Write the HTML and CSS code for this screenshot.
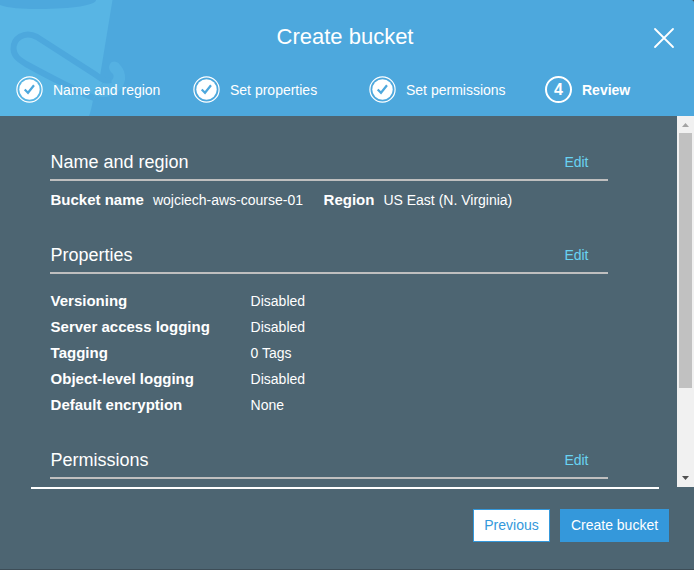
FILE: index.html
```html
<!DOCTYPE html>
<html lang="en">
<head>
<meta charset="utf-8">
<title>Create bucket</title>
<link rel="stylesheet" href="styles.css">
</head>
<body>
<div class="dialog">
  <header class="header">
    <svg class="bucket" width="130" height="116" viewBox="0 0 130 116" aria-hidden="true">
      <path d="M0 0H112.500L100 76L103 82L93 100Q91 111 89 116H0Z" fill="#58b5e4"/>
      <path d="M0 0H96C96 5 73 9 38 9C22 9 8 8 0 5Z" fill="#4da8dd"/>
      <path d="M90 93L103 83C112 83 115 78 113 74C109 71 108 67 110 64C112 60 118 61 120 65C124 69 125.500 74 125 80C123 91 113 97 103 97Q97 97 90 93Z" fill="#55b1e2"/>
      <path d="M111 80C105 82 100 78 96 75L37 37C24 30 13 39 13.500 49C14 57 20 60 26 64C48 76 70 88 94 98" fill="none" stroke="#4da8dd" stroke-width="6"/>
    </svg>
    <h1 class="title">Create bucket</h1>
    <svg class="close" width="22" height="22" viewBox="0 0 22 22" aria-label="Close"><path d="M2 2L20 20M20 2L2 20" stroke="#fff" stroke-width="1.800" stroke-linecap="round"/></svg>
    <ol class="steps">
      <li class="step"><svg class="mark" width="27" height="27" viewBox="0 0 27 27"><circle cx="13.500" cy="13.500" r="12.600" fill="none" stroke="#fff" stroke-width="1.200"/><circle cx="13.500" cy="13.500" r="10.200" fill="#fff"/><path d="M8.700 13.500L12 16.800L18 9.300" fill="none" stroke="#4da8dd" stroke-width="2.200"/></svg>Name and region</li>
      <li class="step"><svg class="mark" width="27" height="27" viewBox="0 0 27 27"><circle cx="13.500" cy="13.500" r="12.600" fill="none" stroke="#fff" stroke-width="1.200"/><circle cx="13.500" cy="13.500" r="10.200" fill="#fff"/><path d="M8.700 13.500L12 16.800L18 9.300" fill="none" stroke="#4da8dd" stroke-width="2.200"/></svg>Set properties</li>
      <li class="step"><svg class="mark" width="27" height="27" viewBox="0 0 27 27"><circle cx="13.500" cy="13.500" r="12.600" fill="none" stroke="#fff" stroke-width="1.200"/><circle cx="13.500" cy="13.500" r="10.200" fill="#fff"/><path d="M8.700 13.500L12 16.800L18 9.300" fill="none" stroke="#4da8dd" stroke-width="2.200"/></svg>Set permissions</li>
      <li class="step current"><span class="number">4</span>Review</li>
    </ol>
  </header>
  <div class="body">
    <main class="content">
      <section>
        <div class="section-head"><h2>Name and region</h2><a class="edit">Edit</a></div>
        <div class="summary"><b>Bucket name</b><span class="bucket-name">wojciech-aws-course-01</span><b>Region</b><span>US East (N. Virginia)</span></div>
      </section>
      <section>
        <div class="section-head"><h2>Properties</h2><a class="edit">Edit</a></div>
        <dl class="properties">
          <dt>Versioning</dt><dd>Disabled</dd>
          <dt>Server access logging</dt><dd>Disabled</dd>
          <dt>Tagging</dt><dd>0 Tags</dd>
          <dt>Object-level logging</dt><dd>Disabled</dd>
          <dt>Default encryption</dt><dd>None</dd>
        </dl>
      </section>
      <section>
        <div class="section-head"><h2>Permissions</h2><a class="edit">Edit</a></div>
      </section>
    </main>
    <div class="scrollbar">
      <svg class="arrow" width="17" height="17" viewBox="0 0 17 17"><path d="M5 11L8.500 7L12 11Z" fill="#a3a3a3"/></svg>
      <div class="thumb"></div>
      <svg class="arrow" width="17" height="17" viewBox="0 0 17 17"><path d="M5 6L8.500 10L12 6Z" fill="#505050"/></svg>
    </div>
  </div>
  <footer class="footer">
    <button class="btn previous">Previous</button>
    <button class="btn create">Create bucket</button>
  </footer>
</div>
</body>
</html>
```
FILE: styles.css
```css
* { box-sizing: border-box; }
body {
  margin: 0;
  font: 14px/20px "Liberation Sans", Arial, sans-serif;
  color: #fff;
  background: #3d4d57;
}
.dialog {
  display: flex;
  flex-direction: column;
  width: 694px;
  height: 569px;
  overflow: hidden;
  background: #4d6572;
  border-radius: 0 3px 0 0;
}
.header {
  position: relative;
  height: 116px;
  background: #4da8dd;
}
.bucket { position: absolute; left: 0; top: 0; }
.close { position: absolute; left: 653px; top: 27px; }
.title {
  position: relative;
  margin: 0;
  padding-top: 24px;
  font-size: 22px;
  line-height: 26px;
  font-weight: 400;
  text-align: center;
  padding-right: 4px;
}
.steps {
  position: relative;
  display: grid;
  grid-template-columns: 177px 176px 176px auto;
  margin: 26px 0 0;
  padding: 0 0 0 16px;
  list-style: none;
}
.step { display: flex; align-items: center; gap: 10px; height: 27px; }
.current { font-weight: 700; }
.number {
  width: 27px;
  height: 27px;
  border: 2px solid #fff;
  border-radius: 50%;
  font-size: 16px;
  line-height: 24px;
  text-align: center;
}
.body { display: flex; justify-content: space-between; height: 371px; }
.content { width: 608px; padding: 32px 0 0 50px; }
.section-head {
  display: flex;
  justify-content: space-between;
  height: 33px;
  padding: 0 19.5px 0 0.5px;
  border-bottom: 2px solid #bfbfbf;
  line-height: 28px;
}
h2 { margin: 0; font-size: 18px; font-weight: 400; }
.edit { color: #69d3f2; }
b, dt { font-size: 15px; font-weight: 700; }
.summary { display: flex; height: 60px; padding: 9px 0 0 0.5px; }
.summary b { margin-right: 9px; }
.bucket-name { margin-right: 20.5px; }
.properties {
  display: grid;
  grid-template-columns: 200px 1fr;
  grid-auto-rows: 26px;
  height: 172px;
  margin: 0;
  padding: 14px 0 0 0.6px;
  line-height: 26px;
}
dd { margin: 0; }
.scrollbar { display: flex; flex-direction: column; width: 17px; background: #f1f1f1; }
.arrow { display: block; }
.thumb { width: 13px; height: 255px; margin: 0 2px 82px; background: #c1c1c1; }
.footer {
  display: flex;
  justify-content: flex-end;
  gap: 10px;
  width: 628px;
  margin-left: 31px;
  padding-top: 20px;
  border-top: 2px solid #fff;
  margin-right: 25px;
}
.btn {
  flex: none;
  height: 33px;
  padding: 0 0 2px;
  border: 1px solid #3498db;
  font: 14px "Liberation Sans", Arial, sans-serif;
}
.previous { width: 77px; color: #3498db; background: #fff; }
.create { width: 109px; margin-right: -10px; color: #fff; background: #3498db; }
```
